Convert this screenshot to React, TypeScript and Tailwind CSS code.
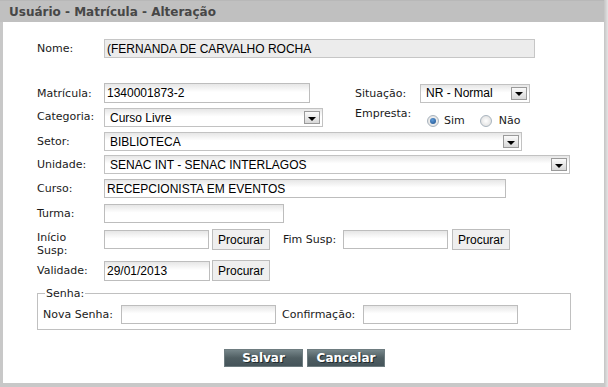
import React from 'react'

const lbl = "font-['DejaVu_Sans',Verdana,sans-serif] text-[11px] text-[#1a1a1a] leading-[13px]"
const val = "font-['Liberation_Sans',Arial,sans-serif] text-[12px] text-black leading-none"
const field = 'border border-[#bdbdbd] bg-[linear-gradient(to_bottom,#e6e6e6,#ffffff_45%)]'

function Input({ w, h = 19, value, dark = false }: { w: number; h?: number; value?: string; dark?: boolean }) {
  return (
    <div
      className={`flex items-center pl-[2px] ${val} ${field} ${dark ? 'border-[#8a8a8a]' : ''}`}
      style={{ width: w, height: h }}
    >
      {value}
    </div>
  )
}

function Select({ w, value, h = 19 }: { w: number; value: string; h?: number }) {
  return (
    <div className={`flex items-center ${field} border-[#c2c2c2]`} style={{ width: w, height: h }}>
      <span className={`flex-1 pl-[5px] ${val}`}>{value}</span>
      <span className="mr-[2px] w-[16px] h-[13px] border border-[#9a9a9a] bg-[linear-gradient(to_bottom,#fafafa,#d8d8d8)] flex items-center justify-center">
        <span className="w-0 h-0 border-l-[4px] border-r-[4px] border-t-[4px] border-l-transparent border-r-transparent border-t-black mt-[2px]" />
      </span>
    </div>
  )
}

function Btn({ children }: { children: React.ReactNode }) {
  return (
    <div className={`flex items-center justify-center w-[58px] h-[21px] border border-[#bdbdbd] bg-[#efefef] ${val}`}>
      {children}
    </div>
  )
}

function Radio({ on }: { on: boolean }) {
  return (
    <span className="w-[12px] h-[12px] rounded-full border border-[#a9b4be] bg-[radial-gradient(circle,#ffffff,#d9d9d9)] flex items-center justify-center">
      {on && <span className="w-[6px] h-[6px] rounded-full bg-[radial-gradient(circle_at_40%_35%,#5d9ad8,#1d4f8a)]" />}
    </span>
  )
}

function DarkBtn({ w, children }: { w: number; children: React.ReactNode }) {
  return (
    <div
      className="flex items-center justify-center h-[18px] border border-[#6e7c80] bg-[linear-gradient(to_bottom,#76868a,#4f5e62_50%,#45545a)] text-white font-bold font-['DejaVu_Sans',Verdana,sans-serif] text-[12px] [text-shadow:1px_1px_0_#1f2a2d]"
      style={{ width: w }}
    >
      {children}
    </div>
  )
}

export default function App() {
  return (
    <div className="w-[608px] h-[387px] flex bg-white">
      <div className="w-[604px] h-full flex flex-col">
        <div className="h-[22px] bg-[#c0c0c0] border-t border-[#b8b8b8] flex items-center pl-[9px]">
          <span className="font-['DejaVu_Sans',Verdana,sans-serif] font-bold text-[12px] text-[#474747]">
            Usuário - Matrícula - Alteração
          </span>
        </div>
        <div className="flex-1 border-l-[3px] border-b-[4px] border-[#c8c8c8] bg-white pl-[34px] flex flex-col">
          <div className="mt-[17px] flex items-center h-[19px]">
            <span className={`${lbl} w-[67px]`}>Nome:</span>
            <div className={`w-[431px] h-[19px] flex items-center pl-[2px] border border-[#c6c6c6] bg-[#ececec] ${val} text-[#777]`}>
              (FERNANDA DE CARVALHO ROCHA
            </div>
          </div>

          <div className="mt-[25px] flex items-center h-[20px]">
            <span className={`${lbl} w-[67px]`}>Matrícula:</span>
            <Input w={206} h={20} value="1340001873-2" dark />
            <span className={`${lbl} ml-[45px] w-[65px]`}>Situação:</span>
            <Select w={110} h={19} value="NR - Normal" />
          </div>

          <div className="mt-[5px] flex items-start h-[20px]">
            <span className={`${lbl} w-[67px] mt-[2px]`}>Categoria:</span>
            <Select w={219} h={19} value="Curso Livre" />
            <span className={`${lbl} ml-[32px] w-[72px] -mt-[1px]`}>Empresta:</span>
            <div className={`flex items-center mt-[6px] ${lbl}`}>
              <Radio on />
              <span className="ml-[5px]">Sim</span>
              <span className="ml-[15px]"><Radio on={false} /></span>
              <span className="ml-[7px]">Não</span>
            </div>
          </div>

          <div className="mt-[4px] flex items-center h-[19px]">
            <span className={`${lbl} w-[67px]`}>Setor:</span>
            <Select w={418} value="BIBLIOTECA" />
          </div>

          <div className="mt-[4px] flex items-center h-[19px]">
            <span className={`${lbl} w-[67px]`}>Unidade:</span>
            <Select w={466} value="SENAC INT - SENAC INTERLAGOS" />
          </div>

          <div className="mt-[5px] flex items-center h-[19px]">
            <span className={`${lbl} w-[67px]`}>Curso:</span>
            <Input w={402} value="RECEPCIONISTA EM EVENTOS" />
          </div>

          <div className="mt-[6px] flex items-center h-[19px]">
            <span className={`${lbl} w-[67px]`}>Turma:</span>
            <Input w={180} />
          </div>

          <div className="mt-[6px] flex items-start h-[21px]">
            <span className={`${lbl} w-[67px] mt-[2px]`}>
              Início
              <br />
              Susp:
            </span>
            <div className="mt-[1px]"><Input w={105} /></div>
            <div className="ml-[3px]"><Btn>Procurar</Btn></div>
            <span className={`${lbl} ml-[13px] w-[60px] mt-[4px]`}>Fim Susp:</span>
            <div className="mt-[1px]"><Input w={105} /></div>
            <div className="ml-[4px]"><Btn>Procurar</Btn></div>
          </div>

          <div className="mt-[10px] flex items-center h-[21px]">
            <span className={`${lbl} w-[67px]`}>Validade:</span>
            <Input w={106} h={20} value="29/01/2013" />
            <div className="ml-[2px]"><Btn>Procurar</Btn></div>
          </div>

          <fieldset className="mt-[6px] w-[534px] border border-[#c0c0c0] pl-[5px] pb-[5px] pt-0">
            <legend className={`${lbl} px-[1px] ml-[2px]`}>Senha:</legend>
            <div className="flex items-center h-[20px] mt-[4px]">
              <span className={`${lbl} w-[78px]`}>Nova Senha:</span>
              <Input w={155} />
              <span className={`${lbl} ml-[6px] w-[81px]`}>Confirmação:</span>
              <Input w={155} />
            </div>
          </fieldset>

          <div className="mt-[19px] flex pl-[187px] gap-[4px]">
            <DarkBtn w={79}>Salvar</DarkBtn>
            <DarkBtn w={78}>Cancelar</DarkBtn>
          </div>
        </div>
      </div>
      <div className="w-[4px] h-full bg-[linear-gradient(to_right,#c4c4c4,#e4e4e4)]" />
    </div>
  )
}
